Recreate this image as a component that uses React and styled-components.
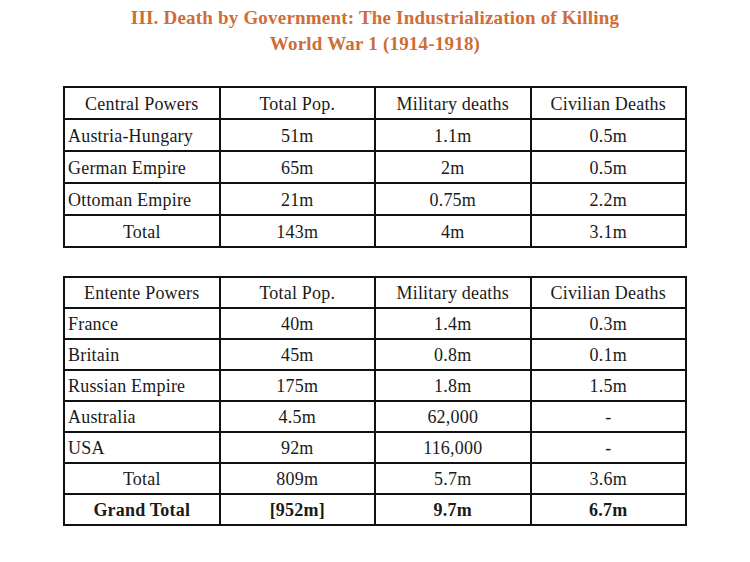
import React from 'react';
import styled, { createGlobalStyle } from 'styled-components';

const GlobalStyle = createGlobalStyle`
  html, body {
    margin: 0;
    padding: 0;
    background: #ffffff;
  }
  body {
    font-family: "Liberation Serif", "DejaVu Serif", serif;
    color: #1a1a1a;
  }
`;

const Page = styled.div`
  width: 750px;
  height: 562px;
  display: flex;
  flex-direction: column;
  align-items: center;
  padding-top: 5px;
  box-sizing: border-box;
`;

const Title = styled.h1`
  margin: 0;
  font-size: 19px;
  line-height: 26px;
  letter-spacing: 0.2px;
  font-weight: bold;
  color: #cf6d36;
  text-align: center;
`;

const Table = styled.table`
  border-collapse: collapse;
  width: 624px;
  table-layout: fixed;
  margin-top: ${(p) => p.$top}px;
  border: 2px solid #111;
`;

const Row = styled.tr`
  height: ${(p) => p.$h}px;
`;

const Cell = styled.td`
  border: 2px solid #111;
  padding: 0 3px;
  font-size: 18px;
  line-height: 20px;
  letter-spacing: 0.2px;
  text-align: ${(p) => (p.$left ? 'left' : 'center')};
  font-weight: ${(p) => (p.$bold ? 'bold' : 'normal')};
  vertical-align: middle;
  padding-top: 1px;
`;

const central = [
  ['Central Powers', 'Total Pop.', 'Military deaths', 'Civilian Deaths', 'head'],
  ['Austria-Hungary', '51m', '1.1m', '0.5m'],
  ['German Empire', '65m', '2m', '0.5m'],
  ['Ottoman Empire', '21m', '0.75m', '2.2m'],
  ['Total', '143m', '4m', '3.1m', 'total'],
];

const entente = [
  ['Entente Powers', 'Total Pop.', 'Military deaths', 'Civilian Deaths', 'head'],
  ['France', '40m', '1.4m', '0.3m'],
  ['Britain', '45m', '0.8m', '0.1m'],
  ['Russian Empire', '175m', '1.8m', '1.5m'],
  ['Australia', '4.5m', '62,000', '-'],
  ['USA', '92m', '116,000', '-'],
  ['Total', '809m', '5.7m', '3.6m', 'total'],
  ['Grand Total', '[952m]', '9.7m', '6.7m', 'grand'],
];

const DataTable = ({ rows, top, rowHeight }) => (
  <Table $top={top}>
    <tbody>
      {rows.map((r) => {
        const kind = r[4];
        const bold = kind === 'grand';
        return (
          <Row key={r[0]} $h={rowHeight}>
            <Cell $left={!kind} $bold={bold}>{r[0]}</Cell>
            <Cell $bold={bold}>{r[1]}</Cell>
            <Cell $bold={bold}>{r[2]}</Cell>
            <Cell $bold={bold}>{r[3]}</Cell>
          </Row>
        );
      })}
    </tbody>
  </Table>
);

export default function App() {
  return (
    <Page>
      <GlobalStyle />
      <Title>
        III. Death by Government: The Industrialization of Killing
        <br />
        World War 1 (1914-1918)
      </Title>
      <DataTable rows={central} top={29} rowHeight={32} />
      <DataTable rows={entente} top={28} rowHeight={31} />
    </Page>
  );
}
